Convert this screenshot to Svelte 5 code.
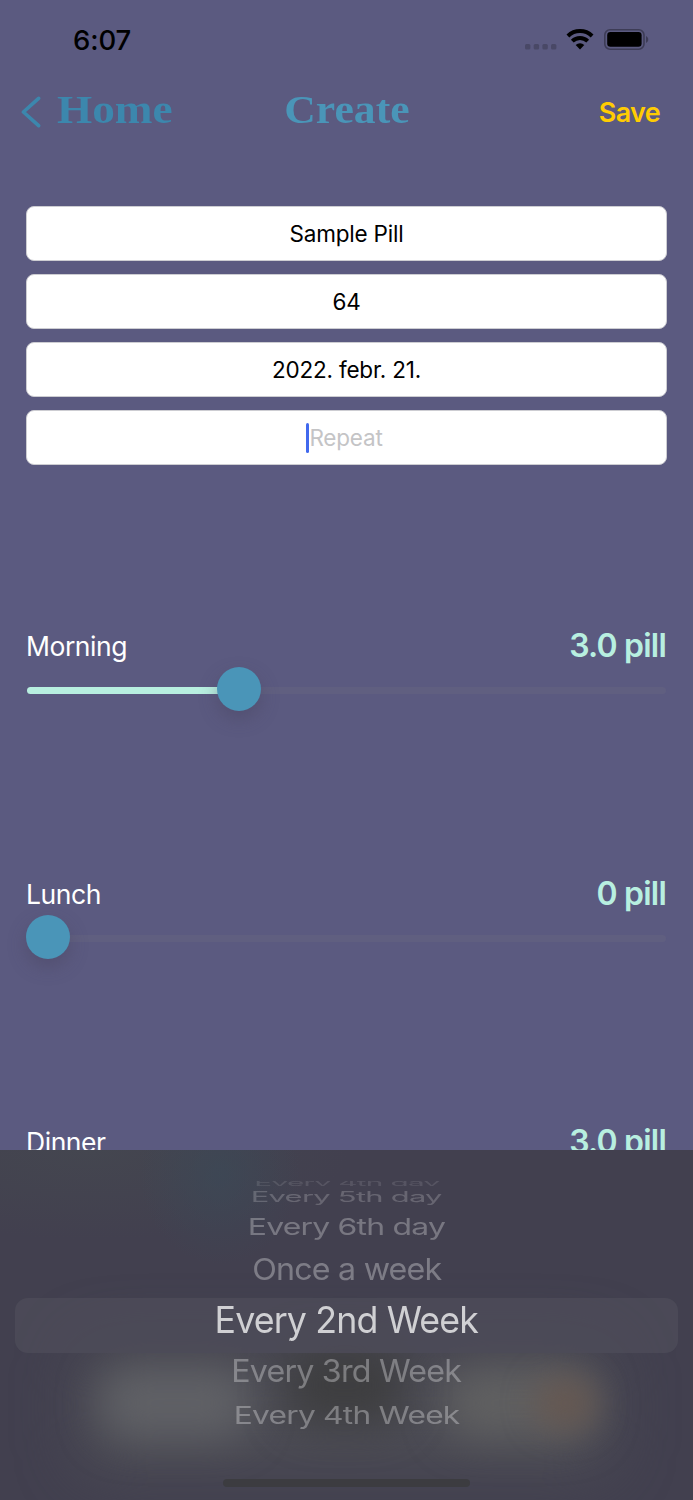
<script lang="ts">
	type Field = { value: string; placeholder?: string };
	type Dose = { label: string; amount: string; percent: number };

	const fields: Field[] = [
		{ value: 'Sample Pill' },
		{ value: '64' },
		{ value: '2022. febr. 21.' },
		{ value: '', placeholder: 'Repeat' }
	];

	const doses: Dose[] = [
		{ label: 'Morning', amount: '3.0 pill', percent: 32 },
		{ label: 'Lunch', amount: '0 pill', percent: 0 },
		{ label: 'Dinner', amount: '3.0 pill', percent: 32 }
	];

	// Rows flatten and fade as they turn away from the middle of the wheel
	const wheel = [
		{ text: 'Every 4th day', height: 9, x: 0.806, y: 0.24, opacity: 0.14 },
		{ text: 'Every 5th day', height: 19, x: 0.836, y: 0.39, opacity: 0.26 },
		{ text: 'Every 6th day', height: 40, x: 0.862, y: 0.63, opacity: 0.38 },
		{ text: 'Once a week', height: 45, x: 0.87, y: 0.82, opacity: 0.42 },
		{ text: 'Every 2nd Week', height: 56.4, x: 0.967, y: 1, opacity: 1 },
		{ text: 'Every 3rd Week', height: 46.2, x: 0.87, y: 0.85, opacity: 0.42 },
		{ text: 'Every 4th Week', height: 43.8, x: 0.857, y: 0.65, opacity: 0.42 }
	];
</script>

<div class="screen">
	<!-- Status bar -->
	<div class="status-bar">
		<span class="time">6:07</span>
		<div class="status-icons">
			<svg class="dots" width="32" height="6" viewBox="0 0 32 6">
				<rect x="0" width="5.4" height="5.4" rx="1.5" />
				<rect x="8.7" width="5.4" height="5.4" rx="1.5" />
				<rect x="17.4" width="5.4" height="5.4" rx="1.5" />
				<rect x="26" width="5.4" height="5.4" rx="1.5" />
			</svg>
			<svg class="wifi" width="28" height="21" viewBox="0 0 28 21">
				<path d="M1.9 7a17.4 17.4 0 0 1 24.2 0" />
				<path d="M6.3 12.1a11.1 11.1 0 0 1 15.4 0" />
				<path class="wedge" d="M14 20.4l-4.3-4.5a6.2 6.2 0 0 1 8.6 0z" />
			</svg>
			<svg class="battery" width="45" height="21" viewBox="0 0 45 21">
				<rect class="case" x="0.8" y="0.8" width="39.2" height="19.4" rx="5.2" />
				<rect x="3.2" y="3.1" width="34.4" height="14.7" rx="3.2" />
				<path class="cap" d="M42 7c3 1.4 3 5.6 0 7z" />
			</svg>
		</div>
	</div>

	<!-- Navigation -->
	<nav class="nav-bar">
		<button class="back">
			<svg width="20" height="32" viewBox="0 0 20 32">
				<path d="M17.6 2.3L2.4 16l15.2 13.7" />
			</svg>
			<span>Home</span>
		</button>
		<h1>Create</h1>
		<button class="save">Save</button>
	</nav>

	<!-- Form -->
	<div class="fields">
		{#each fields as field}
			<div class="field">
				{#if field.value}
					{field.value}
				{:else}
					<span class="caret"></span><span class="placeholder">{field.placeholder}</span>
				{/if}
			</div>
		{/each}
	</div>

	<div class="doses">
		{#each doses as dose}
			<section class="dose">
				<div class="dose-head">
					<span class="dose-label">{dose.label}</span>
					<span class="dose-amount">{dose.amount}</span>
				</div>
				<div class="slider">
					<div class="fill" style="width: {dose.percent}%"></div>
					<div class="thumb" style="--at: {dose.percent / 100}"></div>
				</div>
			</section>
		{/each}
	</div>

	<!-- Repeat picker -->
	<div class="picker">
		<div class="glow wide"></div>
		<div class="glow left"></div>
		<div class="glow right"></div>
		<div class="glow warm"></div>
		<div class="glow dark"></div>
		<div class="highlight"></div>
		<div class="wheel">
			{#each wheel as row, i}
				<div class="row" class:edge={i === 0} style="height: {row.height}px">
					<span style="transform: scale({row.x}, {row.y}); opacity: {row.opacity}">{row.text}</span>
				</div>
			{/each}
		</div>
		<div class="home-indicator"></div>
	</div>
</div>

<style>
	:global(body) {
		margin: 0;
		background: #5b5a80;
	}

	.screen {
		position: relative;
		display: flex;
		flex-direction: column;
		width: 693px;
		height: 1500px;
		overflow: hidden;
		background: #5b5a80;
		font-family: Inter, 'Noto Sans', sans-serif;
	}

	button {
		padding: 0;
		border: 0;
		background: none;
		font-family: inherit;
	}

	/* Status bar */
	.status-bar {
		display: flex;
		justify-content: space-between;
		align-items: center;
		height: 79px;
		padding: 0 44px 0 73px;
		box-sizing: border-box;
	}

	.time {
		font-size: 27.5px;
		font-weight: 500;
		letter-spacing: -0.1px;
	}

	.status-icons {
		display: flex;
		align-items: flex-end;
	}

	.dots {
		margin: 0 9px 0 0;
		fill: #494866;
	}

	.wifi {
		margin-right: 10px;
		fill: none;
		stroke: #000;
		stroke-width: 4;
	}

	.wedge {
		fill: #000;
		stroke: none;
	}

	.case {
		fill: none;
		stroke: #3d3c56;
		stroke-width: 1.6;
	}

	.cap {
		fill: #3d3c56;
	}

	/* Navigation */
	.nav-bar {
		display: grid;
		grid-template-columns: 1fr auto 1fr;
		align-items: center;
		height: 66px;
		padding: 0 33px;
	}

	.back {
		display: flex;
		align-items: center;
		gap: 16px;
		margin-left: -12px;
		color: #3c87ad;
	}

	.back svg {
		fill: none;
		stroke: currentColor;
		stroke-width: 3.6;
		stroke-linecap: round;
		stroke-linejoin: round;
	}

	.back span,
	h1 {
		margin: -5px 0 0;
		font-family: 'Liberation Serif', serif;
		font-size: 39px;
		font-weight: 700;
		line-height: 44px;
		transform: scaleX(1.16);
	}

	.back span {
		transform-origin: left;
	}

	h1 {
		color: #4a95b8;
		transform: scaleX(1.12);
	}

	.save {
		justify-self: end;
		color: #ffcc02;
		font-size: 27px;
		font-weight: 600;
		letter-spacing: -0.7px;
	}

	/* Fields */
	.fields {
		display: flex;
		flex-direction: column;
		gap: 13px;
		padding: 61px 26px 0;
	}

	.field {
		display: flex;
		justify-content: center;
		align-items: center;
		height: 55px;
		box-sizing: border-box;
		border: 1px solid #cdcdd2;
		border-radius: 8px;
		background: #fff;
		color: #000;
		font-size: 22.5px;
		letter-spacing: -0.2px;
	}

	.caret {
		width: 3px;
		height: 30px;
		margin-left: -4px;
		border-radius: 1.5px;
		background: #4169ee;
	}

	.placeholder {
		color: #c4c4c6;
	}

	/* Doses */
	.doses {
		padding: 158px 26px 0;
	}

	.dose {
		height: 248px;
	}

	.dose-head {
		display: flex;
		justify-content: space-between;
		align-items: center;
		height: 44px;
	}

	.dose-label {
		padding: 2px 0 0;
		color: #fff;
		font-size: 26.5px;
		letter-spacing: -0.45px;
	}

	.dose-amount {
		padding-right: 1px;
		color: #b8efe0;
		font-size: 32px;
		font-weight: 600;
		letter-spacing: -0.8px;
	}

	.slider {
		position: relative;
		height: 7px;
		margin: 20px 1px 0;
		border-radius: 4px;
		background: #605f80;
	}

	.fill {
		height: 7px;
		border-radius: 4px;
		background: #b8efe0;
	}

	.thumb {
		position: absolute;
		top: -20px;
		left: calc(-1px + var(--at) * (100% - 42px));
		width: 44px;
		height: 44px;
		border-radius: 50%;
		background: #4a95b8;
		box-shadow: 0 8px 18px rgba(70, 66, 90, 0.4);
	}

	/* Picker */
	.picker {
		position: absolute;
		left: 0;
		right: 0;
		bottom: 0;
		height: 350px;
		overflow: hidden;
		background:
			radial-gradient(ellipse 80px 90px at 220px 25px, rgba(58, 74, 88, 0.6), transparent),
			radial-gradient(ellipse 260px 90px at 90px 0, rgba(70, 76, 80, 0.5), transparent),
			#42404f;
	}

	/* Content showing through the frosted sheet */
	.glow {
		position: absolute;
		border-radius: 30px;
	}

	.wide {
		top: 195px;
		left: 80px;
		width: 530px;
		height: 125px;
		background: #4d4d55;
		filter: blur(30px);
	}

	.left {
		top: 218px;
		left: 100px;
		width: 150px;
		height: 70px;
		background: #606166;
		filter: blur(20px);
	}

	.right {
		top: 218px;
		left: 445px;
		width: 150px;
		height: 70px;
		background: #606061;
		filter: blur(20px);
	}

	.warm {
		top: 228px;
		left: 535px;
		width: 60px;
		height: 50px;
		background: rgba(104, 86, 78, 0.8);
		filter: blur(16px);
	}

	.dark {
		top: 195px;
		left: 285px;
		width: 120px;
		height: 80px;
		background: #3e3e40;
		filter: blur(20px);
	}

	.highlight {
		position: absolute;
		top: 148px;
		left: 15px;
		right: 15px;
		height: 55px;
		border-radius: 13px;
		background: #4c4b58;
		opacity: 0.85;
	}

	.wheel {
		position: relative;
		padding-top: 28px;
	}

	.row {
		display: flex;
		justify-content: center;
		align-items: center;
		color: #d0d0d3;
		font-size: 37px;
		letter-spacing: -0.9px;
		line-height: 45px;
		white-space: nowrap;
	}

	.row.edge {
		clip-path: inset(3px 0 1px);
	}

	.home-indicator {
		position: absolute;
		left: 223px;
		bottom: 13px;
		width: 247px;
		height: 8px;
		border-radius: 4px;
		background: #3c3c40;
	}
</style>
